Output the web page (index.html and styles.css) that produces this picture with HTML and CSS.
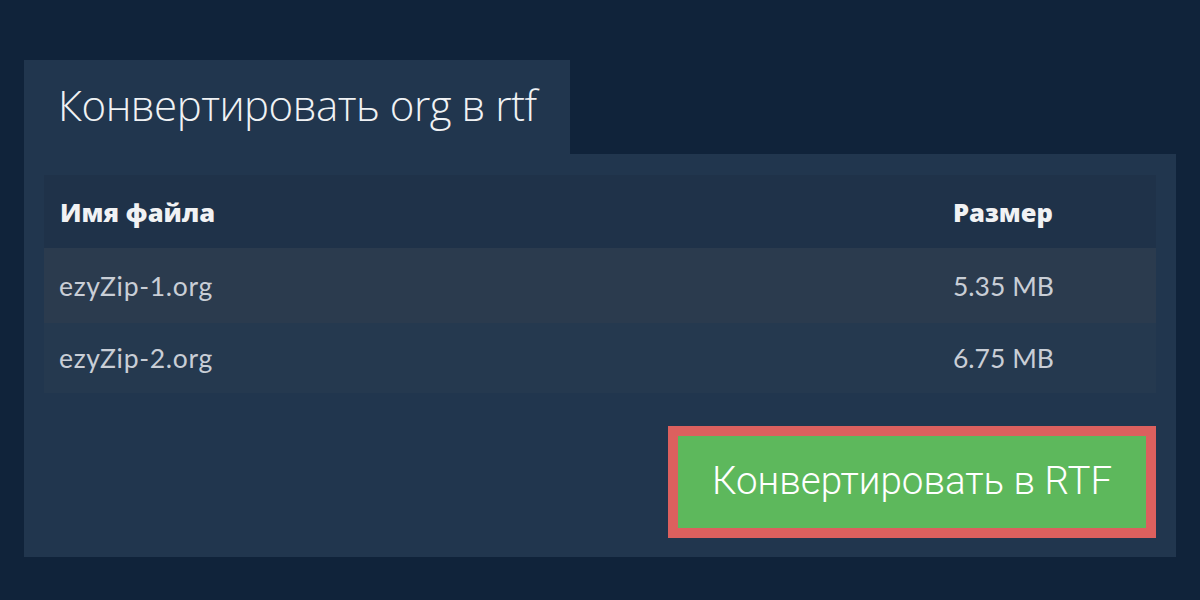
FILE: index.html
```html
<!DOCTYPE html>
<html lang="ru">
<head>
<meta charset="utf-8">
<link rel="stylesheet" href="styles.css">
</head>
<body>
<div class="page">
  <div class="tab"><h1 class="title">Конвертировать org в rtf</h1></div>
  <div class="panel">
    <div class="table">
      <div class="row head"><span class="name">Имя файла</span><span class="size">Размер</span></div>
      <div class="row odd"><span class="name">ezyZip-1.org</span><span class="size">5.35 MB</span></div>
      <div class="row even"><span class="name">ezyZip-2.org</span><span class="size">6.75 MB</span></div>
    </div>
    <div class="actions">
      <button class="convert">Конвертировать в RTF</button>
    </div>
  </div>
</div>
</body>
</html>
```
FILE: styles.css
```css
html, body { margin: 0; padding: 0; }
body {
  width: 1200px; height: 600px; overflow: hidden;
  background: #10233a;
  font-family: Lato, "Open Sans", sans-serif;
}
.page { padding: 60px 24px 0 24px; }
.tab {
  width: 546px; height: 94px; background: #21364e;
  box-sizing: border-box; padding-left: 34px;
  display: flex; align-items: center;
}
.title {
  margin: 0; font-weight: 300; font-size: 42px; color: #f0f2f4;
  font-family: "Open Sans", sans-serif; letter-spacing: -0.5px;
  position: relative; top: -3px;
}
.panel {
  background: #21364e; height: 403px; box-sizing: border-box;
  padding: 21px 20px 0 20px;
}
.table { display: flex; flex-direction: column; }
.row {
  display: flex; align-items: center; padding: 0 16px 0 15px;
  font-size: 26.5px; color: #c9ced6;
}
.row .name { flex: 1; letter-spacing: 0.7px; }
.row .size { width: 187px; }
.head {
  height: 73px; background: #1f3249; color: #f1f2f4;
  font-family: "Open Sans", Lato, sans-serif; font-weight: 800; font-size: 25.5px;
  padding-left: 16px;
}
.head .name { letter-spacing: 0; }
.odd { height: 75px; background: #2b3b4e; }
.even { height: 70px; background: #25394f; }
.actions { display: flex; justify-content: flex-end; padding-top: 33px; }
.convert {
  width: 488px; height: 112px; box-sizing: border-box;
  border: 10px solid #dc605e; background: #5db85c; color: #fff;
  font-family: Roboto, sans-serif; font-weight: 300; font-size: 38.5px;
  padding: 0 0 4px 0;
}
```
